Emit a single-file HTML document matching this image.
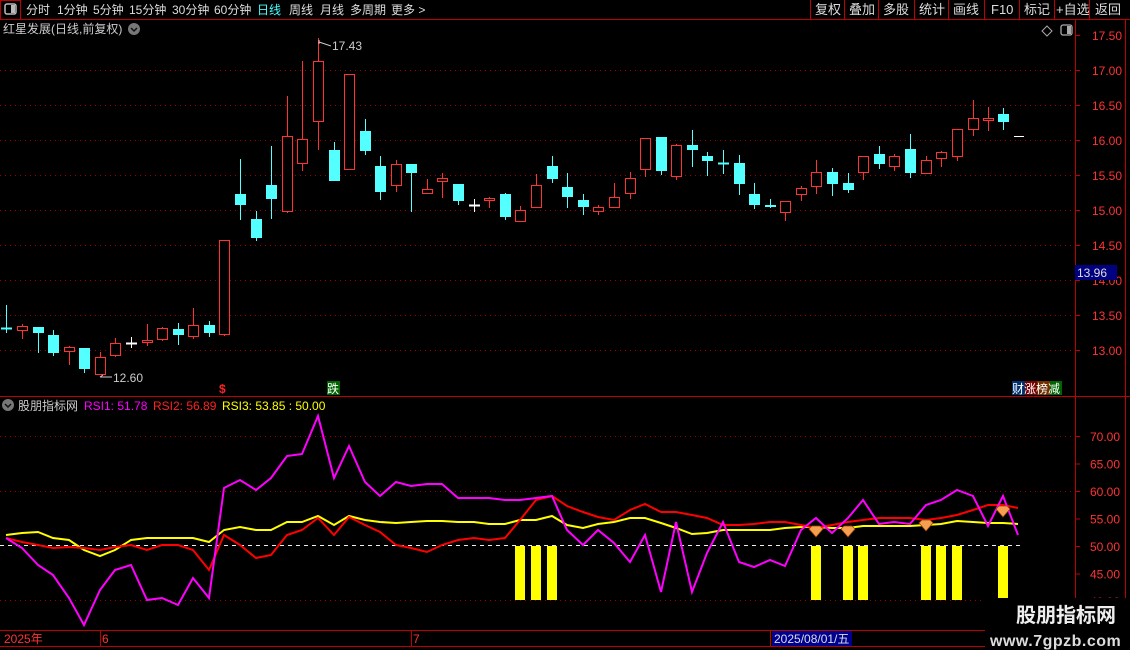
<!DOCTYPE html>
<html><head><meta charset="utf-8"><style>
html,body{margin:0;padding:0;background:#000;width:1130px;height:650px;overflow:hidden;font-family:"Liberation Sans","Noto Sans CJK SC",sans-serif}
svg{position:absolute;left:0;top:0}
</style></head><body>
<svg id="s" width="1130" height="650" xmlns="http://www.w3.org/2000/svg" font-family="Liberation Sans, Noto Sans CJK SC, sans-serif">
<line x1="0" y1="19.5" x2="1130" y2="19.5" stroke="#c00000"/>
<rect x="0.5" y="0.5" width="20" height="19" fill="none" stroke="#c00000"/>
<rect x="5" y="4" width="11" height="10" rx="2" fill="none" stroke="#bbb" stroke-width="1.5"/><rect x="11" y="5" width="4" height="8" fill="#bbb"/>
<g font-size="12" fill="#ddd">
<text x="26" y="14">分时</text><text x="57" y="14">1分钟</text><text x="93" y="14">5分钟</text><text x="129" y="14">15分钟</text><text x="172" y="14">30分钟</text><text x="214" y="14">60分钟</text>
<text x="257" y="14" fill="#4ff">日线</text><text x="289" y="14">周线</text><text x="320" y="14">月线</text><text x="350" y="14">多周期</text><text x="391" y="14">更多 &gt;</text>
</g>
<g stroke="#c00000"><line x1="810.5" y1="0" x2="810.5" y2="19"/><line x1="844.5" y1="0" x2="844.5" y2="19"/><line x1="878.5" y1="0" x2="878.5" y2="19"/><line x1="914.5" y1="0" x2="914.5" y2="19"/><line x1="948.5" y1="0" x2="948.5" y2="19"/><line x1="984.5" y1="0" x2="984.5" y2="19"/><line x1="1019.5" y1="0" x2="1019.5" y2="19"/><line x1="1054.5" y1="0" x2="1054.5" y2="19"/><line x1="1089.5" y1="0" x2="1089.5" y2="19"/></g>
<g font-size="13" fill="#ddd"><text x="815" y="14">复权</text><text x="849" y="14">叠加</text><text x="883" y="14">多股</text><text x="919" y="14">统计</text><text x="953" y="14">画线</text><text x="991" y="14">F10</text><text x="1024" y="14">标记</text><text x="1056" y="14">+自选</text><text x="1095" y="14">返回</text></g>
<text x="3" y="33" font-size="12" fill="#ccc">红星发展(日线,前复权)</text>
<circle cx="134" cy="29" r="6" fill="#777"/><path d="M131 28l3 3 3-3" stroke="#111" stroke-width="1.5" fill="none"/>
<path d="M1047 26l5 5-5 5-5-5z" fill="none" stroke="#aaa"/>
<rect x="1061" y="25" width="11" height="10" rx="2" fill="none" stroke="#aaa" stroke-width="1.3"/><rect x="1067" y="26" width="4" height="8" fill="#aaa"/>
<line x1="1075.5" y1="20" x2="1075.5" y2="630" stroke="#c00000"/>
<line x1="1125.5" y1="20" x2="1125.5" y2="630" stroke="#c00000"/>
<line x1="0" y1="396.5" x2="1130" y2="396.5" stroke="#c00000"/>
<line x1="0" y1="630.5" x2="985" y2="630.5" stroke="#c00000"/>
<line x1="0" y1="646.5" x2="985" y2="646.5" stroke="#c00000"/>
<g id="grid" stroke="#a00000" stroke-dasharray="1,4"></g>
<g id="axl" font-size="12" fill="#f33"></g>
<rect x="1075" y="265" width="42" height="15" fill="#000080"/><text x="1077" y="277" font-size="12" fill="#ddd">13.96</text>
<g id="cand"></g>
<text x="332" y="50" font-size="12" fill="#ccc">17.43</text><path d="M319 42l12 4" stroke="#ccc"/><path d="M319 40v4" stroke="#ccc"/>
<text x="113" y="382" font-size="12" fill="#ccc">12.60</text><path d="M100 377h12M100 377l3-2" stroke="#ccc"/>
<text x="219" y="393" font-size="12" fill="#f22" font-weight="bold">$</text>
<rect x="327" y="381" width="13" height="14" fill="#006400"/><text x="327" y="393" font-size="12" fill="#fff">跌</text>
<rect x="1012" y="381" width="13" height="14" fill="#003070"/><rect x="1025" y="381" width="12" height="14" fill="#700"/><rect x="1037" y="381" width="13" height="14" fill="#703000"/><rect x="1050" y="381" width="12" height="14" fill="#006400"/>
<text x="1012" y="393" font-size="12" fill="#fff">财涨榜减</text>
<circle cx="8" cy="405" r="6" fill="#777"/><path d="M5 404l3 3 3-3" stroke="#111" stroke-width="1.5" fill="none"/>
<text x="18" y="410" font-size="12" fill="#ccc">股朋指标网</text>
<text x="84" y="410" font-size="12" fill="#f0f">RSI1: 51.78</text>
<text x="153" y="410" font-size="12" fill="#f22">RSI2: 56.89</text>
<text x="222" y="410" font-size="12" fill="#ff0">RSI3: 53.85 : 50.00</text>
<line x1="0" y1="545.5" x2="1020" y2="545.5" stroke="#eee" stroke-dasharray="4,4"/>
<g id="rsi"></g>
<g stroke="#c00000"><line x1="100.5" y1="630" x2="100.5" y2="646"/><line x1="411.5" y1="630" x2="411.5" y2="646"/><line x1="770.5" y1="630" x2="770.5" y2="646"/></g>
<text x="4" y="643" font-size="12" fill="#f33">2025年</text><text x="102" y="643" font-size="12" fill="#f33">6</text><text x="413" y="643" font-size="12" fill="#f33">7</text>
<rect x="772" y="631" width="80" height="15" fill="#000090"/><text x="774" y="643" font-size="12" fill="#ddd">2025/08/01/五</text>
<rect x="985" y="598" width="145" height="52" fill="#000"/>
<text x="1016" y="622" font-size="20" font-weight="bold" fill="#eee">股朋指标网</text>
<text x="990" y="646" font-size="16" font-weight="bold" fill="#ddd" letter-spacing="0.5">www.7gpzb.com</text>
</svg>
<script>
var NS="http://www.w3.org/2000/svg";
function el(p,t,a){var e=document.createElementNS(NS,t);for(var k in a)e.setAttribute(k,a[k]);p.appendChild(e);return e;}
var g=document.getElementById('grid'),ax=document.getElementById('axl');
[70,105,140,175,210,245,280,315,350].forEach(function(y){el(g,'line',{x1:0,y1:y+.5,x2:1075,y2:y+.5});});
[436,491,600].forEach(function(y){el(g,'line',{x1:0,y1:y+.5,x2:1075,y2:y+.5});});
var pl=["17.50","17.00","16.50","16.00","15.50","15.00","14.50","14.00","13.50","13.00"];
pl.forEach(function(t,i){var y=35+i*35;el(ax,'line',{x1:1075,y1:y+.5,x2:1080,y2:y+.5,stroke:'#c00000'});var tx=el(ax,'text',{x:1092,y:y+5});tx.textContent=t;});
["70.00","65.00","60.00","55.00","50.00","45.00","40.00"].forEach(function(t,i){var y=436+i*27.5;el(ax,'line',{x1:1075,y1:y+.5,x2:1080,y2:y+.5,stroke:'#c00000'});var tx=el(ax,'text',{x:1090,y:y+5});tx.textContent=t;});
var C=[[6,328,328,305,333,'c'],[22,326,331,324,339,'r'],[38,327,333,327,353,'c'],[53,335,353,330,356,'c'],[69,347,352,346,365,'r'],[84,348,369,348,373,'c'],[100,357,375,352,375,'r'],[115,343,356,338,357,'r'],[131,343,343,337,348,'w'],[147,340,343,324,346,'r'],[162,328,340,327,341,'r'],[178,329,335,323,345,'c'],[193,325,337,308,339,'r'],[209,325,333,321,337,'c'],[224,240,335,240,336,'r'],[240,194,205,159,220,'c'],[256,219,238,211,241,'c'],[271,185,199,146,219,'c'],[287,136,212,96,213,'r'],[302,139,164,61,171,'r'],[318,61,122,38,150,'r'],[334,150,181,142,181,'c'],[349,74,170,74,170,'r'],
[365,131,151,119,155,'c'],[380,166,192,156,200,'c'],[396,164,186,160,192,'r'],[411,164,173,164,212,'c'],[427,189,194,179,194,'r'],[442,178,182,173,198,'r'],[458,184,201,184,205,'c'],[474,205,205,199,212,'w'],[489,198,201,197,208,'r'],[505,194,217,193,220,'c'],[520,210,222,206,222,'r'],[536,185,208,174,208,'r'],[552,166,179,156,183,'c'],[567,187,197,173,208,'c'],[583,200,207,194,215,'c'],[598,207,212,205,215,'r'],[614,197,208,183,208,'r'],[630,178,194,172,199,'r'],[645,138,170,138,177,'r'],[661,137,171,137,175,'c'],[676,145,177,144,180,'r'],[692,145,150,130,167,'c'],[707,156,161,152,176,'c'],
[723,163,163,150,174,'c'],[739,163,184,155,195,'c'],[754,194,205,183,209,'c'],[770,205,207,199,208,'c'],[785,201,213,201,221,'r'],[801,188,195,186,201,'r'],[816,172,187,160,194,'r'],[832,172,184,168,196,'c'],[848,183,190,173,193,'c'],[863,156,173,156,180,'r'],[879,154,164,146,169,'c'],[894,156,167,154,171,'r'],[910,149,173,134,178,'c'],[926,160,174,156,174,'r'],[941,152,159,151,167,'r'],[957,129,157,129,161,'r'],[973,118,130,100,136,'r'],[988,118,121,107,131,'r'],[1003,114,122,108,130,'c']];
var cg=document.getElementById('cand');
C.forEach(function(c){var x=c[0],col=c[5]=='r'?'#ff3232':(c[5]=='c'?'#54ffff':'#fff');
 el(cg,'line',{x1:x+.5,y1:c[3],x2:x+.5,y2:c[4],stroke:col});
 if(c[2]-c[1]<2){el(cg,'line',{x1:x-5,y1:c[1]+.5,x2:x+6,y2:c[1]+.5,stroke:col,'stroke-width':2});}
 else if(c[5]=='r'){el(cg,'rect',{x:x-4.5,y:c[1]+.5,width:10,height:c[2]-c[1]-1,fill:'#000',stroke:col,'stroke-width':1});}
 else el(cg,'rect',{x:x-5,y:c[1],width:11,height:c[2]-c[1],fill:col});});
el(cg,'line',{x1:1014,y1:136.5,x2:1024,y2:136.5,stroke:'#fff'});
var xs=C.map(function(c){return c[0]});xs.push(1018);
var M=[538,548,565,575,598,625,590,570,565,600,598,605,578,598,488,480,490,478,456,454,416,478,446,482,496,482,486,484,484,498,498,498,500,500,498,496,530,545,530,543,562,535,592,522,592,553,522,562,567,560,566,530,518,533,518,500,524,522,524,505,500,490,496,526,496,535];
var R=[538,542,545,548,547,548,550,547,545,550,545,545,550,570,535,545,558,555,535,530,518,535,517,525,532,545,548,552,545,540,538,540,538,520,500,496,506,512,517,520,510,504,512,512,515,518,525,525,524,522,522,525,528,525,522,520,518,518,518,520,518,515,510,505,505,508];
var Y=[535,533,532,538,540,550,556,550,540,538,538,538,538,542,530,527,530,530,522,522,516,525,516,520,522,523,522,521,521,522,522,524,524,520,520,516,525,528,524,522,518,518,523,528,534,533,530,530,530,530,528,527,527,528,528,526,526,526,526,525,524,521,522,523,523,524];
var rg=document.getElementById('rsi');
[520,536,552,816,848,863,926,941,957,1003].forEach(function(x){el(rg,'rect',{x:x-5,y:546,width:10,height:54,fill:'#ff0'});});
function pts(a){return a.map(function(v,i){return xs[i]+','+v}).join(' ');}
el(rg,'polyline',{points:pts(Y),fill:'none',stroke:'#ff0','stroke-width':2});
el(rg,'polyline',{points:pts(R),fill:'none',stroke:'#f00','stroke-width':2});
el(rg,'polyline',{points:pts(M),fill:'none',stroke:'#f0f','stroke-width':2});
[[816,532],[848,532],[926,526],[1003,512]].forEach(function(d){var x=d[0],y=d[1];el(rg,'path',{d:'M'+(x-7)+' '+(y-3)+'l3-3h8l3 3-7 8z',fill:'#f5a050',stroke:'#a04000','stroke-width':.7});});
</script>
</body></html>
